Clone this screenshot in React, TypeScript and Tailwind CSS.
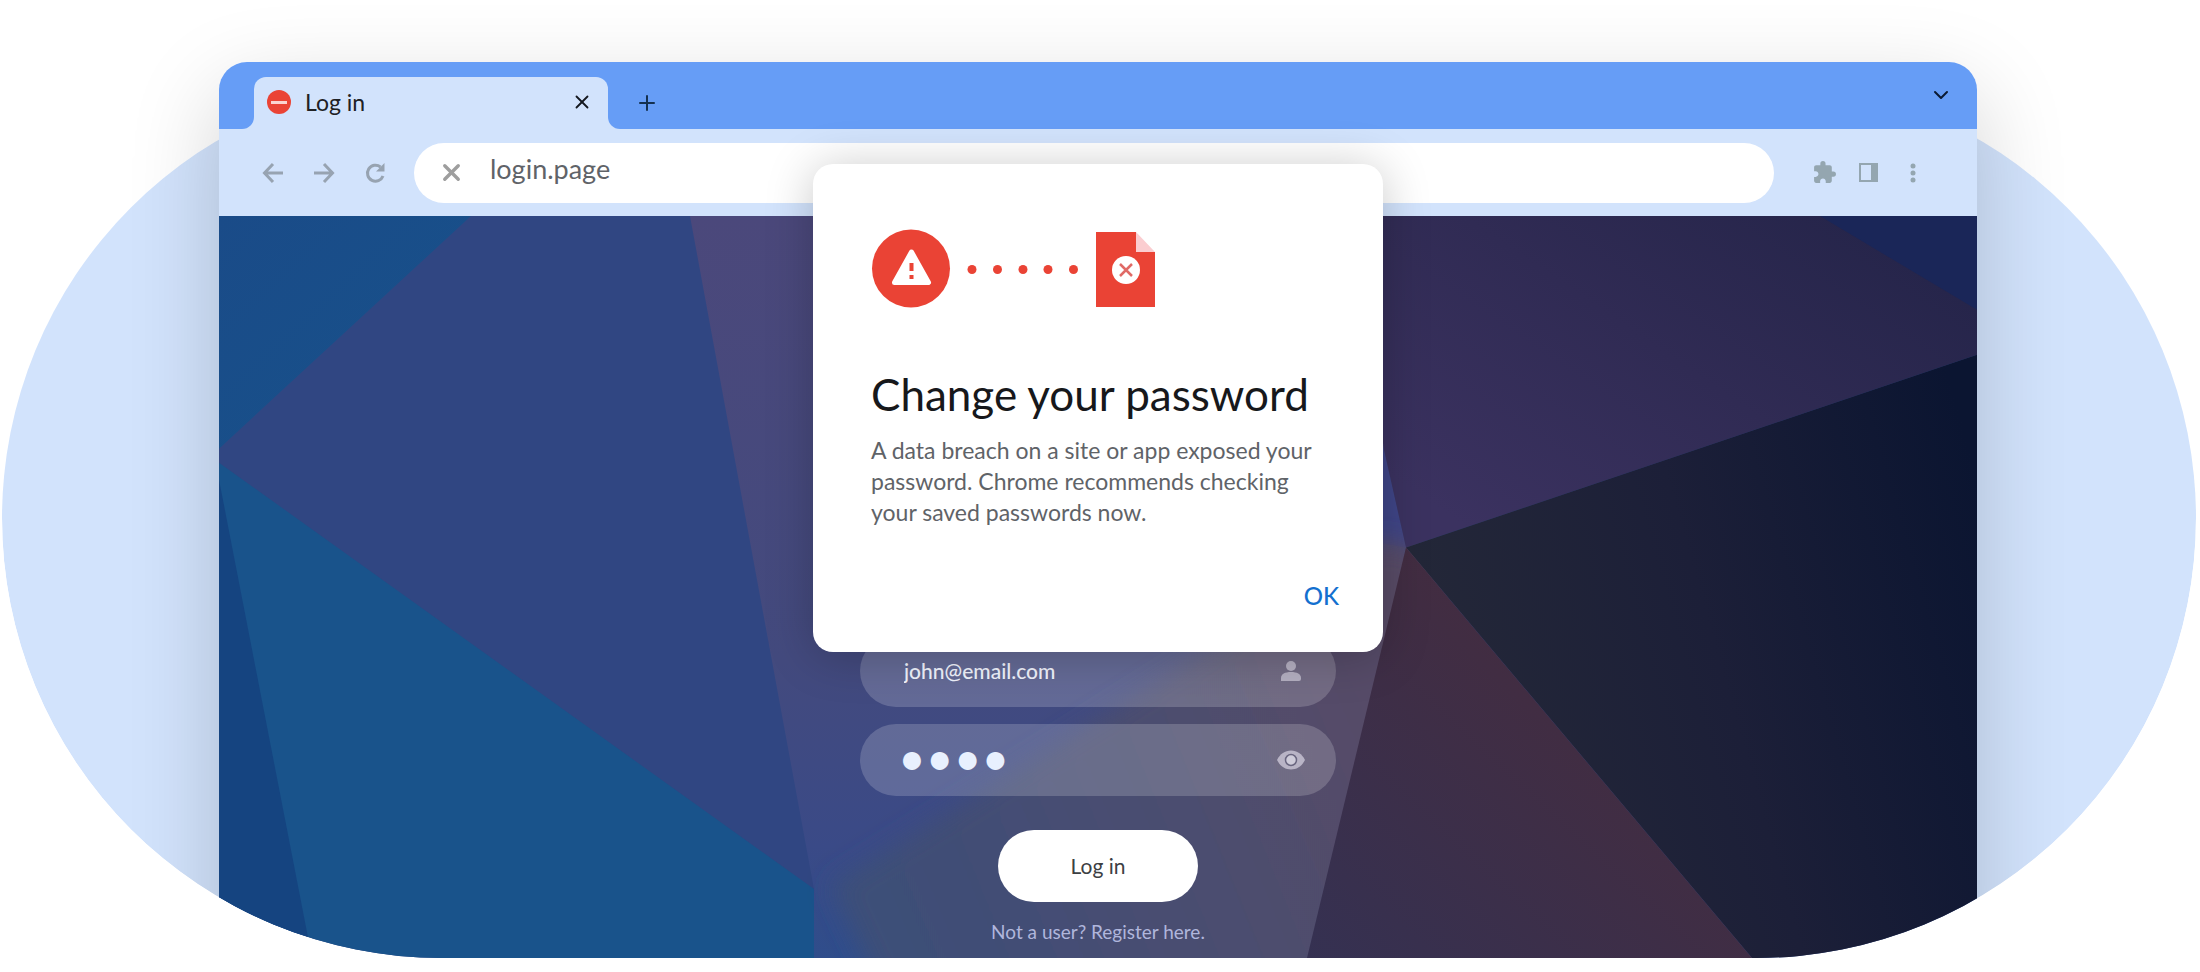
import { MdExtension } from "react-icons/md";
import { LuChevronDown, LuPlus, LuX } from "react-icons/lu";

const Backdrop = () => {
    return (
        <svg
            className="absolute inset-0 h-full w-full"
            viewBox="219 216 1758 743"
            preserveAspectRatio="none"
            aria-hidden="true"
        >
            <defs>
                <linearGradient id="center" x1="0" y1="0" x2="0" y2="1">
                    <stop offset="0" stopColor="#4b487b" />
                    <stop offset="0.6" stopColor="#434a7e" />
                    <stop offset="0.85" stopColor="#3a4a87" />
                    <stop offset="1" stopColor="#2f4d8b" />
                </linearGradient>
                <linearGradient id="haze" x1="0" y1="0.8" x2="1" y2="0.5">
                    <stop offset="0" stopColor="#3b4f79" />
                    <stop offset="0.5" stopColor="#494d71" />
                    <stop offset="1" stopColor="#584c66" />
                </linearGradient>
                <linearGradient id="violet" x1="0" y1="0.7" x2="0.9" y2="0">
                    <stop offset="0" stopColor="#3b3260" />
                    <stop offset="0.5" stopColor="#302b54" />
                    <stop offset="1" stopColor="#242449" />
                </linearGradient>
                <linearGradient id="night" x1="0" y1="0.5" x2="1" y2="0.2">
                    <stop offset="0" stopColor="#242838" />
                    <stop offset="0.5" stopColor="#1c1f38" />
                    <stop offset="1" stopColor="#0b1531" />
                </linearGradient>
                <linearGradient id="wine" x1="0.7" y1="0.3" x2="0" y2="1">
                    <stop offset="0" stopColor="#442c3f" />
                    <stop offset="1" stopColor="#353152" />
                </linearGradient>
                <linearGradient id="ocean" x1="0" y1="0" x2="1" y2="1">
                    <stop offset="0" stopColor="#1a4b88" />
                    <stop offset="1" stopColor="#17528b" />
                </linearGradient>
                <filter id="soften" x="-10%" y="-10%" width="120%" height="120%">
                    <feGaussianBlur stdDeviation="12" />
                </filter>
            </defs>
            <rect x="219" y="216" width="1758" height="743" fill="#304682" />
            <path d="M219 216H471L219 449Z" fill="url(#ocean)" />
            <path d="M219 463L814 890V959H219Z" fill="#19538b" />
            <path d="M219 480L312 959H219Z" fill="#154480" />
            <path d="M690 216H1384V450L1406 548L1307 959H814V890Z" fill="url(#center)" />
            <path d="M1360 380L1384 450L1406 548L1360 540Z" fill="#3f4587" />
            <path d="M832 886L1384 540L1440 560L1340 990H880Z" fill="url(#haze)" filter="url(#soften)" />
            <path d="M1350 216H1977V355L1406 548L1384 450Z" fill="url(#violet)" />
            <path d="M1820 216H1977V310Z" fill="#1a2658" />
            <path d="M1406 548L1977 355V959H1752Z" fill="url(#night)" />
            <path d="M1406 548L1752 959H1307Z" fill="url(#wine)" />
        </svg>
    );
};

const TabStrip = () => {
    return (
        <div className="flex h-[67px] items-end rounded-t-[28px] bg-[#669df6] pr-6">
            <div className="h-3 w-[35px] overflow-hidden bg-[#d2e3fc]">
                <div className="h-full rounded-br-xl bg-[#669df6]"></div>
            </div>
            <div className="flex h-[52px] w-[354px] items-center rounded-t-xl bg-[#d2e3fc] pr-[15px] pb-0.5 pl-[13px]">
                <div className="flex size-6 items-center justify-center rounded-full bg-[#ea4335]">
                    <div className="h-[3px] w-4 bg-[#fbd3d0]"></div>
                </div>
                <span className="ml-3.5 text-[23px] text-[#202124]">Log in</span>
                <button type="button" aria-label="Close tab" className="ml-auto text-[#14181f]">
                    <LuX size={22} />
                </button>
            </div>
            <div className="h-3 w-3 bg-[#d2e3fc]">
                <div className="h-full rounded-bl-xl bg-[#669df6]"></div>
            </div>
            <button type="button" aria-label="New tab" className="mb-[14px] ml-[15px] text-[#14304f]">
                <LuPlus size={24} />
            </button>
            <button type="button" aria-label="Search tabs" className="mb-[22px] ml-auto text-[#0b1a33]">
                <LuChevronDown size={24} />
            </button>
        </div>
    );
};

const Toolbar = () => {
    return (
        <div className="flex h-[87px] items-center bg-[#d2e3fc] pr-[55px] pl-10">
            <nav className="flex items-center gap-[23px] text-[#97a3b1]">
                <button type="button" aria-label="Back">
                    <svg width="28" height="28" viewBox="0 0 28 28" fill="none" stroke="currentColor" strokeWidth="3">
                        <path d="M24 14H6M14 5L5.500 14L14 23" />
                    </svg>
                </button>
                <button type="button" aria-label="Forward">
                    <svg width="28" height="28" viewBox="0 0 28 28" fill="none" stroke="currentColor" strokeWidth="3">
                        <path d="M4 14H22M14 5L22.500 14L14 23" />
                    </svg>
                </button>
                <button type="button" aria-label="Reload">
                    <svg width="28" height="28" viewBox="0 0 28 28" fill="none" stroke="currentColor" strokeWidth="3">
                        <path d="M22 17A8 8 0 1 1 19.500 8" />
                        <path d="M23.500 4V12.500H15Z" fill="currentColor" stroke="none" />
                    </svg>
                </button>
            </nav>
            <div className="ml-[25px] flex h-[60px] flex-1 items-center rounded-full bg-white pl-6">
                <LuX size={27} strokeWidth={3} className="text-[#9e9e9e]" />
                <input
                    aria-label="Address"
                    defaultValue="login.page"
                    className="mb-1.5 ml-[25px] flex-1 bg-transparent text-[27px] text-[#5f6368] outline-none"
                />
            </div>
            <div className="ml-[38px] flex items-center text-[#94a6b0]">
                <button type="button" aria-label="Extensions">
                    <MdExtension size={25} />
                </button>
                <button type="button" aria-label="Side panel" className="ml-[22px]">
                    <svg width="19" height="19" viewBox="0 0 19 19" fill="currentColor" fillRule="evenodd">
                        <path d="M0 0H19V19H0ZM2 2V17H12V2Z" />
                    </svg>
                </button>
                <button type="button" aria-label="Menu" className="ml-[26px]">
                    <svg width="18" height="20" viewBox="0 0 18 20" fill="currentColor">
                        <circle cx="9" cy="3" r="2.5" />
                        <circle cx="9" cy="10" r="2.5" />
                        <circle cx="9" cy="17" r="2.5" />
                    </svg>
                </button>
            </div>
        </div>
    );
};

const LoginForm = () => {
    return (
        <form className="relative flex flex-col items-center pt-[419px] pb-3">
            <div className="flex h-[72px] w-[476px] items-center rounded-full bg-white/18 pr-[35px] pl-11">
                <input
                    type="email"
                    aria-label="Email"
                    defaultValue="john@email.com"
                    className="w-full flex-1 bg-transparent text-[21px] font-medium text-[#f1f4fd] outline-none"
                />
                <svg width="20" height="20" viewBox="0 0 20 20" fill="#b4afc1">
                    <circle cx="10" cy="5" r="5" />
                    <path d="M0 20V17C0 13 4 11 10 11S20 13 20 17V18Q20 20 18 20Z" />
                </svg>
            </div>
            <div className="mt-[17px] flex h-[72px] w-[476px] items-center rounded-full bg-white/18 pr-[31px] pl-[38px]">
                <input
                    type="password"
                    aria-label="Password"
                    defaultValue="pass"
                    className="mb-1.5 w-full flex-1 bg-transparent text-[48px] leading-[60px] text-[#e8f0fe] outline-none"
                />
                <svg width="28" height="20" viewBox="0 0 28 20">
                    <path d="M0 10C3 4 8 0.500 14 0.500S25 4 28 10C25 16 20 19.500 14 19.500S3 16 0 10Z" fill="#b9b4c6" />
                    <circle cx="14" cy="10" r="5.500" fill="#cfccda" stroke="#6a6680" strokeWidth="1.500" />
                </svg>
            </div>
            <button type="button" className="mt-[34px] h-[72px] w-[200px] rounded-full bg-white text-[21px] text-[#3c4043]">
                Log in
            </button>
            <p className="mt-4 text-[19px] leading-7 text-[#b0b6dc]">
                Not a user? <a href="#register">Register here.</a>
            </p>
        </form>
    );
};

const PasswordDialog = () => {
    return (
        <div
            role="dialog"
            aria-labelledby="dialog-title"
            className="absolute top-[102px] left-1/2 w-[570px] -translate-x-1/2 rounded-[20px] bg-white pt-[65px] pr-11 pb-[38px] pl-[58px] shadow-[0_4px_48px_rgba(0,0,0,0.22)]"
        >
            <svg width="285" height="80" viewBox="-1 0 285 80" aria-hidden="true">
                <circle cx="39" cy="39.500" r="39" fill="#ea4335" />
                <path
                    d="M39.500 23L56.500 53.500H22.500Z"
                    fill="#fff"
                    stroke="#fff"
                    strokeWidth="5"
                    strokeLinejoin="round"
                />
                <path d="M37.500 34H41.500V42H37.500ZM37.500 46H41.500V50H37.500Z" fill="#ea4335" />
                <g fill="#ea4335">
                    <circle cx="100" cy="40.500" r="4.500" />
                    <circle cx="125.500" cy="40.500" r="4.500" />
                    <circle cx="151" cy="40.500" r="4.500" />
                    <circle cx="176" cy="40.500" r="4.500" />
                    <circle cx="201.500" cy="40.500" r="4.500" />
                    <path d="M224 3H264V23H283V78H224Z" />
                </g>
                <path d="M264 3L283 23H264Z" fill="#fbcdd0" />
                <circle cx="254" cy="41" r="14" fill="#fff" />
                <path d="M248 35L260 47M260 35L248 47" stroke="#e06a66" strokeWidth="2.500" />
            </svg>
            <h1 id="dialog-title" className="mt-[55px] text-[44px] leading-[60px] whitespace-nowrap text-[#17181b]">
                Change your password
            </h1>
            <p className="mt-[11px] text-[23px] leading-[31px] whitespace-nowrap text-[#5f6368]">
                A data breach on a site or app exposed your
                <br />
                password. Chrome recommends checking
                <br />
                your saved passwords now.
            </p>
            <div className="mt-[50px] flex justify-end">
                <button type="button" className="text-[24px] leading-9 font-medium text-[#1370cf]">
                    OK
                </button>
            </div>
        </div>
    );
};

const App = () => {
    return (
        <main className="bg-white pb-[13px] font-['Lato','Open_Sans',sans-serif]">
            <div className="relative mr-1 ml-0.5 overflow-hidden rounded-b-[440px] pt-[62px] pr-[219px] pl-[217px]">
                <div className="absolute inset-x-0 top-[79px] bottom-0 rounded-full bg-[#d2e3fc]"></div>
                <div className="relative rounded-t-[28px] shadow-[0_30px_90px_rgba(0,0,0,0.18)]">
                    <TabStrip />
                    <Toolbar />
                    <div className="relative">
                        <Backdrop />
                        <LoginForm />
                    </div>
                    <PasswordDialog />
                </div>
            </div>
        </main>
    );
};

export default App;
